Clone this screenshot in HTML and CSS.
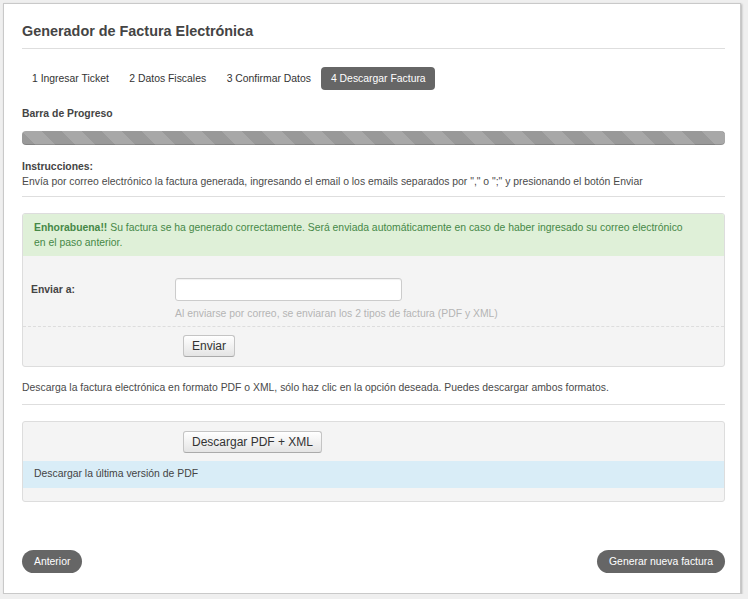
FILE: index.html
```html
<!DOCTYPE html>
<html lang="es">
<head>
<meta charset="utf-8">
<title>Generador de Factura Electrónica</title>
<link rel="stylesheet" href="styles.css">
</head>
<body>
<div class="panel">
  <h1 class="title">Generador de Factura Electrónica</h1>
  <hr class="rule rule-title">
  <ul class="steps">
    <li class="step">1 Ingresar Ticket</li>
    <li class="step">2 Datos Fiscales</li>
    <li class="step">3 Confirmar Datos</li>
    <li class="step step-active">4 Descargar Factura</li>
  </ul>
  <div class="label-strong progress-label">Barra de Progreso</div>
  <div class="progress"></div>
  <div class="instr">
    <div class="label-strong">Instrucciones:</div>
    <div>Envía por correo electrónico la factura generada, ingresando el email o los emails separados por "," o ";" y presionando el botón Enviar</div>
  </div>
  <hr class="rule rule-instr">
  <div class="box">
    <div class="alert-success"><b>Enhorabuena!!</b> Su factura se ha generado correctamente. Será enviada automáticamente en caso de haber ingresado su correo electrónico en el paso anterior.</div>
    <div class="form-row">
      <label class="form-label" for="email">Enviar a:</label>
      <div class="form-field">
        <input id="email" class="input" type="text">
        <div class="help">Al enviarse por correo, se enviaran los 2 tipos de factura (PDF y XML)</div>
      </div>
    </div>
    <div class="actions">
      <button class="btn" type="button">Enviar</button>
    </div>
  </div>
  <p class="desc">Descarga la factura electrónica en formato PDF o XML, sólo haz clic en la opción deseada. Puedes descargar ambos formatos.</p>
  <hr class="rule rule-desc">
  <div class="box box-dl">
    <div class="dl-row"><button class="btn" type="button">Descargar PDF + XML</button></div>
    <div class="info-row">Descargar la última versión de PDF</div>
    <div class="dl-foot"></div>
  </div>
  <div class="footer">
    <button class="pill" type="button">Anterior</button>
    <button class="pill" type="button">Generar nueva factura</button>
  </div>
</div>
</body>
</html>
```

FILE: styles.css
```css
html, body {
  margin: 0;
  padding: 0;
}
body {
  background: #efefef;
  font-family: "Liberation Sans", Arial, sans-serif;
  font-size: 10.4px;
  color: #4a4a4a;
}
.panel {
  margin: 3px 0 0 3px;
  width: 738px;
  box-sizing: border-box;
  background: #fff;
  border: 1px solid #c9c9c9;
  box-shadow: 1px 1px 2px rgba(0,0,0,0.25);
  padding: 17px 15px 20px 18px;
}
.title {
  margin: 0;
  font-size: 14.4px;
  line-height: 20px;
  font-weight: bold;
  color: #444;
}
.rule {
  border: 0;
  border-top: 1px solid #dedede;
  margin: 0;
  height: 0;
}
.rule-title { margin-top: 7px; }
.steps {
  list-style: none;
  margin: 18px 0 0 0;
  padding: 0;
  display: flex;
}
.step {
  height: 23px;
  line-height: 23px;
  padding: 0 10px;
  margin-right: 0.5px;
  border-radius: 4px;
  color: #333;
}
.step-active {
  background: #666;
  color: #fff;
  padding: 0 9.5px;
}
.label-strong {
  font-weight: bold;
  color: #444;
}
.progress-label {
  margin-top: 16px;
  line-height: 15px;
}
.progress {
  margin-top: 10px;
  height: 14px;
  border-radius: 4px;
  background-color: #999;
  background-image: linear-gradient(45deg, rgba(255,255,255,0.15) 25%, transparent 25%, transparent 50%, rgba(255,255,255,0.15) 50%, rgba(255,255,255,0.15) 75%, transparent 75%, transparent);
  background-size: 40px 40px;
  box-shadow: inset 0 -1px 0 rgba(0,0,0,0.15);
}
.instr {
  margin-top: 14px;
  line-height: 15px;
}
.rule-instr { margin-top: 7px; }
.box {
  margin-top: 16px;
  border: 1px solid #ddd;
  border-radius: 3px;
  background: #f4f4f4;
  overflow: hidden;
}
.alert-success {
  background: #dff0d8;
  color: #468847;
  line-height: 15px;
  padding: 6px 35px 6px 11px;
}
.form-row {
  display: grid;
  grid-template-columns: 144px 1fr;
  padding: 22px 0 5px 8px;
  border-bottom: 1px dashed #ddd;
}
.form-label {
  font-weight: bold;
  color: #444;
  line-height: 23px;
}
.input {
  display: block;
  box-sizing: border-box;
  width: 227px;
  height: 23px;
  margin: 0;
  border: 1px solid #ccc;
  border-radius: 3px;
  background: #fff;
  box-shadow: inset 0 1px 1px rgba(0,0,0,0.06);
}
.help {
  margin-top: 5px;
  line-height: 15px;
  color: #b5b5b5;
}
.actions {
  padding: 8px 0 9px 160px;
}
.btn {
  display: block;
  height: 22px;
  margin: 0;
  padding: 0 8px;
  font-family: "Liberation Sans", Arial, sans-serif;
  font-size: 12px;
  color: #333;
  border: 1px solid #c4c4c4;
  border-bottom-color: #aaa;
  border-radius: 3px;
  background: linear-gradient(#fff, #e4e4e4);
  box-shadow: inset 0 1px 0 rgba(255,255,255,0.3);
}
.desc {
  margin: 13px 0 0 0;
  line-height: 15px;
}
.rule-desc { margin-top: 9px; }
.box-dl { margin-top: 16px; }
.dl-row {
  padding: 9px 0 8px 160px;
}
.info-row {
  background: #d9edf7;
  color: #444;
  height: 27px;
  line-height: 25px;
  padding-left: 11px;
}
.dl-foot {
  height: 13px;
}
.footer {
  margin-top: 48px;
  display: flex;
  justify-content: space-between;
}
.pill {
  height: 23px;
  margin: 0;
  padding: 0 12px;
  border: 0;
  border-radius: 12px;
  background: #666;
  color: #fff;
  font-family: "Liberation Sans", Arial, sans-serif;
  font-size: 10.4px;
}
```
